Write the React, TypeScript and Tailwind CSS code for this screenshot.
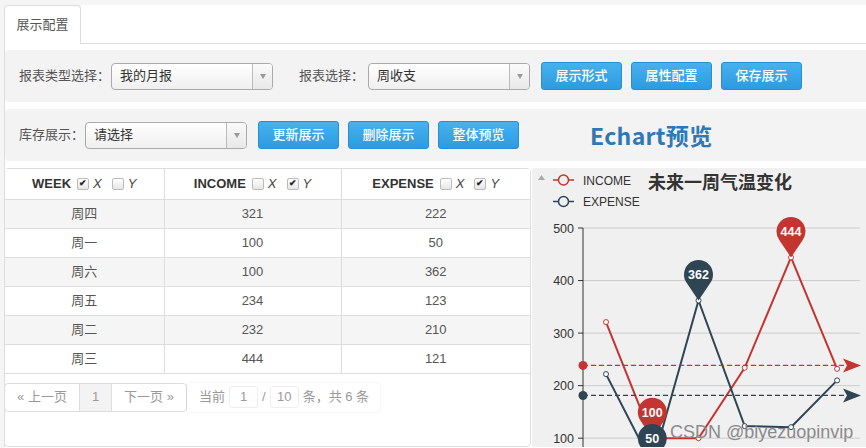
import React from 'react';

const cjk = '"Liberation Sans", "Noto Sans CJK SC", sans-serif';

const rows = [
  { week: '周四', income: 321, expense: 222 },
  { week: '周一', income: 100, expense: 50 },
  { week: '周六', income: 100, expense: 362 },
  { week: '周五', income: 234, expense: 123 },
  { week: '周二', income: 232, expense: 210 },
  { week: '周三', income: 444, expense: 121 },
];

const Select: React.FC<{ value: string }> = ({ value }) => (
  <div className="flex h-[27px] w-[162px] items-stretch overflow-hidden rounded-[4px] border border-[#aaa] bg-gradient-to-b from-white to-[#efefef]">
    <div className="flex flex-1 items-center pl-[8px] text-[13px] text-[#333]">{value}</div>
    <div className="flex w-[20px] items-center justify-center border-l border-[#bbb] bg-gradient-to-b from-[#fafafa] to-[#e8e8e8]">
      <span className="block h-0 w-0 border-x-[3px] border-t-[5px] border-x-transparent border-t-[#999]" />
    </div>
  </div>
);

const Btn: React.FC<{ children: React.ReactNode }> = ({ children }) => (
  <button className="h-[28px] w-[81px] rounded-[3px] border border-[#2b8dd0] bg-gradient-to-b from-[#47b1ee] to-[#2c9be0] text-[13px] font-medium text-white">
    {children}
  </button>
);

const Check: React.FC<{ on?: boolean; label: string }> = ({ on, label }) => (
  <span className="ml-[5px] inline-flex items-center">
    <span className="flex h-[12px] w-[12px] items-center justify-center rounded-[2px] border border-[#bbb] bg-gradient-to-b from-white to-[#e6e6e6] text-[9px] leading-none text-[#222]">
      {on ? '✔' : ''}
    </span>
    <span className="ml-[4px] text-[13px] font-normal italic text-[#444]">{label}</span>
  </span>
);

const RED = '#c23531';
const NAVY = '#2f4554';
const XS = [74, 120.3, 166.5, 212.7, 259, 305.1];
const y = (v: number) => 60 + (500 - v) * 0.5255;
const income = [321, 100, 100, 234, 444, 232];
const expense = [222, 50, 362, 123, 121, 210];

const Pin: React.FC<{ x: number; v: number; color: string }> = ({ x, v, color }) => {
  const tip = y(v);
  const cy = tip - 26;
  const r = 14.5;
  const d = `M ${x} ${tip} L ${x - 11.6} ${cy + 8.7} A ${r} ${r} 0 1 1 ${x + 11.6} ${cy + 8.7} Z`;
  return (
    <g>
      <path d={d} fill={color} />
      <text x={x} y={cy + 4.5} textAnchor="middle" fontSize="12.5" fontWeight="600" fill="#fff" fontFamily='"Liberation Sans", sans-serif'>
        {v}
      </text>
    </g>
  );
};

const AvgLine: React.FC<{ v: number; color: string }> = ({ v, color }) => {
  const yy = y(v);
  return (
    <g>
      <line x1={51} y1={yy} x2={314} y2={yy} stroke={color} strokeWidth="1.2" strokeDasharray="5 3" />
      <circle cx={51} cy={yy} r={4.5} fill={color} />
      <path d={`M 311 ${yy - 7} L 329 ${yy} L 311 ${yy + 7} L 315 ${yy} Z`} fill={color} />
    </g>
  );
};

const Chart: React.FC = () => {
  const pts = (data: number[]) => data.map((v, i) => `${XS[i]},${y(v)}`).join(' ');
  const avgI = income.reduce((a, b) => a + b, 0) / income.length;
  const avgE = expense.reduce((a, b) => a + b, 0) / expense.length;
  return (
    <svg width="334" height="279" viewBox="0 0 334 279" className="block overflow-hidden">
      {/* legend */}
      <path d="M 6 12 L 9.5 7 L 13 12 Z" fill="#aaa" />
      <line x1={21} y1={12} x2={42} y2={12} stroke={RED} strokeWidth="1.5" />
      <circle cx={31.5} cy={12} r={5} fill="#f0f0f0" stroke={RED} strokeWidth="1.5" />
      <text x={51} y={16.5} fontSize="12" fill="#333" fontFamily='"Liberation Sans", sans-serif'>INCOME</text>
      <line x1={21} y1={33.5} x2={42} y2={33.5} stroke={NAVY} strokeWidth="1.5" />
      <circle cx={31.5} cy={33.5} r={5} fill="#f0f0f0" stroke={NAVY} strokeWidth="1.5" />
      <text x={51} y={38} fontSize="12" fill="#333" fontFamily='"Liberation Sans", sans-serif'>EXPENSE</text>
      <text x={116} y={21} fontSize="18" fontWeight="700" fill="#333" fontFamily='"Noto Sans CJK SC", sans-serif'>
        未来一周气温变化
      </text>

      {/* grid + axis */}
      {[500, 400, 300, 200, 100].map((v) => (
        <g key={v}>
          <line x1={51} y1={y(v)} x2={328} y2={y(v)} stroke="#ccc" strokeWidth="1" />
          <line x1={46} y1={y(v)} x2={51} y2={y(v)} stroke="#333" strokeWidth="1" />
          <text x={42} y={y(v) + 4.5} textAnchor="end" fontSize="12.5" fill="#333" fontFamily='"Liberation Sans", sans-serif'>
            {v}
          </text>
        </g>
      ))}
      <line x1={51} y1={y(500)} x2={51} y2={279} stroke="#333" strokeWidth="1" />

      {/* series */}
      <polyline points={pts(income)} fill="none" stroke={RED} strokeWidth="2" />
      <polyline points={pts(expense)} fill="none" stroke={NAVY} strokeWidth="2" />
      {income.map((v, i) => (
        <circle key={'i' + i} cx={XS[i]} cy={y(v)} r={2.5} fill="#fff" stroke={RED} strokeWidth="1" />
      ))}
      {expense.map((v, i) => (
        <circle key={'e' + i} cx={XS[i]} cy={y(v)} r={2.5} fill="#fff" stroke={NAVY} strokeWidth="1" />
      ))}

      <AvgLine v={avgI} color={RED} />
      <AvgLine v={avgE} color={NAVY} />

      <Pin x={XS[4]} v={444} color={RED} />
      <Pin x={XS[1]} v={100} color={RED} />
      <Pin x={XS[2]} v={362} color={NAVY} />
      <Pin x={XS[1]} v={50} color={NAVY} />
    </svg>
  );
};

const App: React.FC = () => {
  return (
    <div className="h-[448px] w-[866px] overflow-hidden bg-[#f5f5f5] pt-[5px]" style={{ fontFamily: cjk }}>
      <div className="ml-[4px] h-full bg-white">
        {/* tabs */}
        <div className="flex h-[39px] items-end border-b border-[#ddd] bg-[#f5f5f5]">
          <div className="-mb-px flex h-[39px] w-[77px] items-center justify-center rounded-t-[4px] border border-b-0 border-[#ddd] bg-white text-[13px] text-[#555]">
            展示配置
          </div>
          <div className="h-[38px] flex-1 bg-white" />
        </div>

        <div className="border-l border-[#ddd] pt-[6px]">
          {/* toolbar 1 */}
          <div className="flex h-[52px] items-center rounded-l-[4px] bg-[#f3f3f3] pl-[14px]">
            <span className="text-[13px] text-[#555]">报表类型选择：</span>
            <div className="ml-[1px]">
              <Select value="我的月报" />
            </div>
            <span className="ml-[26px] text-[13px] text-[#555]">报表选择：</span>
            <div className="ml-[4px]">
              <Select value="周收支" />
            </div>
            <div className="ml-[11px] flex gap-[9px]">
              <Btn>展示形式</Btn>
              <Btn>属性配置</Btn>
              <Btn>保存展示</Btn>
            </div>
          </div>

          {/* toolbar 2 */}
          <div className="mt-[7px] flex h-[52px] items-center rounded-l-[4px] bg-[#f3f3f3] pl-[14px]">
            <span className="text-[13px] text-[#555]">库存展示：</span>
            <div className="ml-[1px]">
              <Select value="请选择" />
            </div>
            <div className="ml-[11px] flex gap-[9px]">
              <Btn>更新展示</Btn>
              <Btn>删除展示</Btn>
              <Btn>整体预览</Btn>
            </div>
            <span className="ml-[71px] text-[23px] font-bold tracking-[0.3px] text-[#2f78b3]" style={{ fontFamily: '"Noto Sans CJK SC", sans-serif' }}>
              Echart预览
            </span>
          </div>

          {/* content */}
          <div className="mt-[7px] flex -ml-px">
            <div className="flex h-[279px] w-[527px] flex-col rounded-[4px] border border-[#ddd]">
              <table className="w-full border-collapse text-center text-[13px] text-[#555]" style={{ fontFamily: cjk }}>
                <thead>
                  <tr className="h-[30px] border-b border-[#ddd] bg-white">
                    <th className="w-[159px] border-r border-[#ddd] font-bold text-[#333]">
                      <span className="inline-flex items-center">
                        WEEK
                        <span className="ml-[1px]" />
                        <Check on label="X" />
                        <span className="ml-[5px]" />
                        <Check label="Y" />
                      </span>
                    </th>
                    <th className="w-[177px] border-r border-[#ddd] font-bold text-[#333]">
                      <span className="inline-flex items-center">
                        INCOME
                        <span className="ml-[1px]" />
                        <Check label="X" />
                        <span className="ml-[5px]" />
                        <Check on label="Y" />
                      </span>
                    </th>
                    <th className="font-bold text-[#333]">
                      <span className="inline-flex items-center">
                        EXPENSE
                        <span className="ml-[1px]" />
                        <Check label="X" />
                        <span className="ml-[5px]" />
                        <Check on label="Y" />
                      </span>
                    </th>
                  </tr>
                </thead>
                <tbody>
                  {rows.map((r, i) => (
                    <tr key={r.week} className={`h-[29px] border-b border-[#ddd] ${i % 2 === 0 ? 'bg-[#f5f5f5]' : 'bg-white'}`}>
                      <td className="border-r border-[#ddd]">{r.week}</td>
                      <td className="border-r border-[#ddd]">{r.income}</td>
                      <td>{r.expense}</td>
                    </tr>
                  ))}
                </tbody>
              </table>

              {/* pagination */}
              <div className="-ml-px mt-[9px] flex items-center text-[13px] text-[#999]">
                <div className="flex h-[29px] overflow-hidden rounded-[4px] border border-[#ddd] bg-white">
                  <span className="flex w-[75px] items-center justify-center border-r border-[#ddd]">« 上一页</span>
                  <span className="flex w-[32px] items-center justify-center border-r border-[#ddd] bg-[#f3f3f3]">1</span>
                  <span className="flex w-[74px] items-center justify-center">下一页 »</span>
                </div>
                <div className="flex h-[29px] items-center rounded-r-[4px] pl-[12px] pr-[11px] shadow-[0_0_2px_rgba(0,0,0,0.12)]">
                  <span>当前</span>
                  <span className="mx-[4px] flex h-[22px] w-[29px] items-center justify-center rounded-[3px] border border-[#eee]">1</span>
                  <span>/</span>
                  <span className="mx-[4px] flex h-[22px] w-[29px] items-center justify-center rounded-[3px] border border-[#eee]">10</span>
                  <span>条，共 6 条</span>
                </div>
              </div>
            </div>

            <div className="relative ml-[1px] h-[279px] flex-1 overflow-hidden rounded-tl-[3px] bg-[#f0f0f0]">
              <Chart />
              <span
                className="absolute left-[138px] top-[251px] whitespace-nowrap text-[18px] text-[#8a8a8a]"
                style={{ fontFamily: '"Liberation Sans", sans-serif' }}
              >
                CSDN @biyezuopinvip
              </span>
            </div>
          </div>
        </div>
      </div>
    </div>
  );
};

export default App;
